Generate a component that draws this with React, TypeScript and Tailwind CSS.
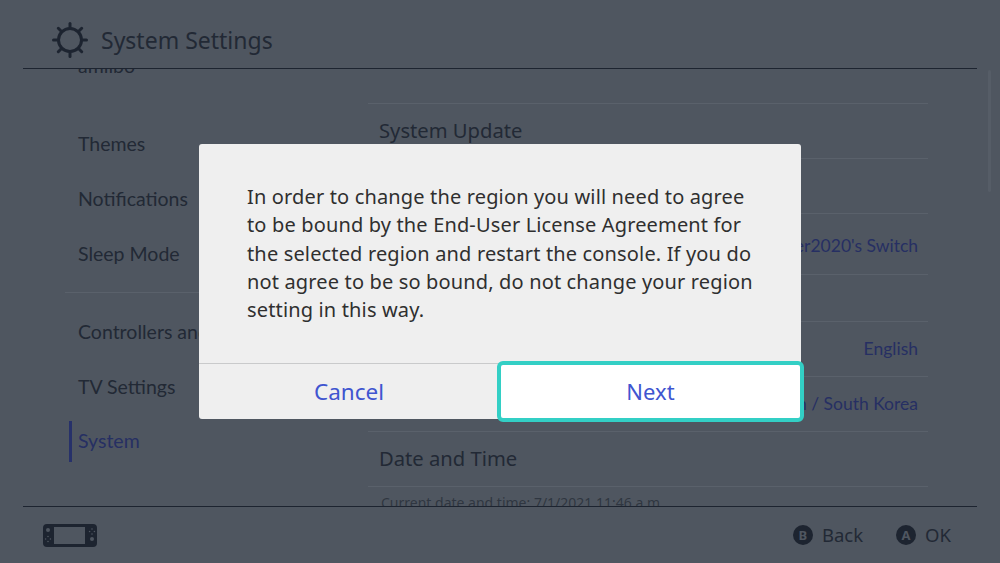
const font = { fontFamily: '"Noto Sans", "Open Sans", sans-serif' };
const narrow = { fontFamily: 'Lato, "Noto Sans", sans-serif' };

function SideItem({ label, active }: { label: string; active?: boolean }) {
  return (
    <div style={narrow} className="relative h-[55px] flex items-center pl-[78px] text-[19.5px] leading-none">
      {active && <span className="absolute left-[69px] top-[7px] w-[3px] h-[41px] bg-[#27316a]" />}
      <span className={active ? 'text-[#262f63] -mt-[2px]' : 'text-[#222935]'}>{label}</span>
    </div>
  );
}

function Row({ label, value, up }: { label?: string; value?: string; up?: boolean }) {
  return (
    <div className="h-[55px] flex items-center justify-between pl-[11px] pr-[10px] border-b border-[#5a616b]">
      <span className="text-[#222935] text-[20.2px] leading-none -mt-[2px]">{label}</span>
      {value && (
        <span style={narrow} className={up ? 'text-[#262f63] text-[17.5px] leading-none -mt-[3px]' : 'text-[#262f63] text-[17.5px] leading-none'}>
          {value}
        </span>
      )}
    </div>
  );
}

function GearIcon() {
  return (
    <svg width="38" height="38" viewBox="0 0 38 38" fill="none" stroke="#1d2430">
      <circle cx="19" cy="19" r="11.5" strokeWidth="3" />
      <g strokeWidth="3" strokeLinecap="round">
        <path d="M19 2.5V6" />
        <path d="M19 32v3.5" />
        <path d="M2.5 19H6" />
        <path d="M32 19h3.5" />
        <path d="M7.3 7.3l2.5 2.5" />
        <path d="M28.2 28.2l2.5 2.5" />
        <path d="M7.3 30.7l2.5-2.5" />
        <path d="M28.2 9.8l2.5-2.5" />
      </g>
    </svg>
  );
}

function ConsoleIcon() {
  return (
    <svg width="54" height="23" viewBox="0 0 54 23">
      <rect width="54" height="23" rx="4" fill="#1d2430" />
      <rect x="11" y="3" width="31" height="17" fill="#4f5660" />
      <circle cx="5" cy="6" r="2" fill="#4f5660" />
      <circle cx="49" cy="15" r="2" fill="#4f5660" />
      <g fill="#4f5660">
        <circle cx="5" cy="12.5" r="0.8" />
        <circle cx="5" cy="17.5" r="0.8" />
        <circle cx="2.6" cy="15" r="0.8" />
        <circle cx="7.4" cy="15" r="0.8" />
        <circle cx="49" cy="5" r="0.8" />
        <circle cx="49" cy="10" r="0.8" />
        <circle cx="46.6" cy="7.5" r="0.8" />
        <circle cx="51.4" cy="7.5" r="0.8" />
      </g>
    </svg>
  );
}

function Hint({ letter, label }: { letter: string; label: string }) {
  return (
    <div className="flex items-center gap-[9px]">
      <span className="w-[20px] h-[20px] rounded-full bg-[#1d2430] text-[#4f5660] text-[13px] font-bold flex items-center justify-center leading-none">
        {letter}
      </span>
      <span className="text-[18.5px] leading-none text-[#222935]">{label}</span>
    </div>
  );
}

export default function App() {
  return (
    <div style={font} className="relative w-[1000px] h-[563px] overflow-hidden bg-[#4f5660] flex flex-col">
      <header className="h-[69px] mx-[23px] border-b border-[#1d2430] flex items-center gap-[12px] pl-[28px] pt-[12px] shrink-0">
        <GearIcon />
        <h1 className="text-[23px] text-[#222935] leading-none">System Settings</h1>
      </header>

      <main className="h-[437px] flex overflow-hidden">
        <nav className="w-[320px] shrink-0 -mt-[31px]">
          <SideItem label="amiibo" />
          <div className="h-[23px]" />
          <SideItem label="Themes" />
          <SideItem label="Notifications" />
          <SideItem label="Sleep Mode" />
          <div className="h-[23px] ml-[65px] flex items-center">
            <div className="w-full h-px bg-[#5a616b]" />
          </div>
          <SideItem label="Controllers and Sensors" />
          <SideItem label="TV Settings" />
          <SideItem label="System" active />
        </nav>

        <section className="w-[560px] ml-[48px] shrink-0 pt-[34px]">
          <div className="border-t border-[#5a616b]" />
          <Row label="System Update" />
          <Row />
          <div className="h-[6px]" />
          <Row value="Nintendouser2020's Switch" up />
          <div className="h-[47px] border-b border-[#5a616b]" />
          <Row value="English" />
          <Row value="Japan / South Korea" />
          <Row label="Date and Time" />
          <p className="px-[13px] pt-[9px] text-[14px] leading-none text-[#2f3641]">
            Current date and time: 7/1/2021 11:46 a.m.
          </p>
        </section>

        <div className="ml-[60px] mt-px w-[3px] h-[122px] bg-[#565d67] rounded-full shrink-0" />
      </main>

      <footer className="h-[57px] mx-[23px] border-t border-[#1d2430] flex items-center justify-between pl-[20px] pr-[26px] shrink-0">
        <ConsoleIcon />
        <div className="flex items-center gap-[33px]">
          <Hint letter="B" label="Back" />
          <Hint letter="A" label="OK" />
        </div>
      </footer>

      {/* Dialog */}
      <div className="absolute left-[199px] top-[144px] w-[602px] h-[275px] bg-[#efefef] rounded-[3px] flex flex-col">
        <p className="h-[219px] px-[48px] pt-[39px] text-[20px] tracking-[0.15px] leading-[28.3px] text-[#2f2f2f] whitespace-nowrap">
          In order to change the region you will need to agree
          <br />
          to be bound by the End-User License Agreement for
          <br />
          the selected region and restart the console. If you do
          <br />
          not agree to be so bound, do not change your region
          <br />
          setting in this way.
        </p>
        <div className="h-[56px] border-t border-[#c9cacb] flex">
          <button className="w-[300px] text-[22.5px] text-[#4055d0]">Cancel</button>
          <button className="absolute left-[298px] top-[217px] w-[307px] h-[61px] bg-white border-[4px] border-[#33cfc5] rounded-[6px] text-[22px] text-[#4055d0]">
            Next
          </button>
        </div>
      </div>
    </div>
  );
}
